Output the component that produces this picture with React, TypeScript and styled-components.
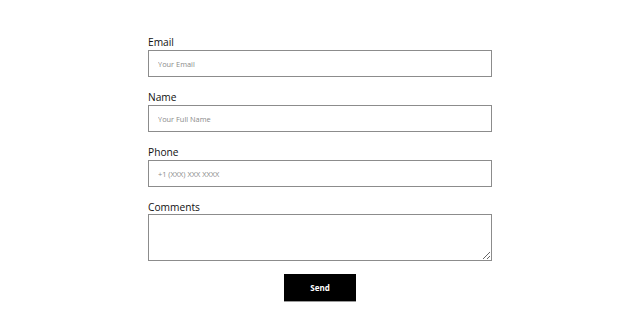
import React from 'react'
import styled, { createGlobalStyle } from 'styled-components'

const GlobalStyle = createGlobalStyle`
  body {
    margin: 0;
    background-color: #FFF;
    font-family: 'Open Sans', 'Liberation Sans', sans-serif;
  }
`

export const Page = styled.div`
  display: flex;
  justify-content: center;
  padding-top: 34px;
`

export const Form = styled.form`
  display: flex;
  flex-direction: column;
  width: 344px;
`

export const Field = styled.div`
  display: flex;
  flex-direction: column;
  margin-bottom: 12px;
`

export const Label = styled.label`
  font-size: 10.2px;
  line-height: 16px;
  color: #111;
`

const fieldBase = `
  box-sizing: border-box;
  width: 100%;
  border: 1px solid #8c8c8c;
  border-radius: 0;
  padding: 0 9px;
  font-family: 'Open Sans', 'Liberation Sans', sans-serif;
  font-size: 7.4px;
  color: #222;
  background-color: #FFF;
  outline: none;

  &::placeholder {
    color: #8a8a8a;
  }
`

export const Input = styled.input`
  ${fieldBase}
  height: 27px;
`

export const TextArea = styled.textarea`
  ${fieldBase}
  height: 47px;
  margin-top: -1px;
  padding-top: 6px;
  resize: vertical;
`

export const SendButton = styled.button`
  align-self: center;
  width: 72px;
  height: 28px;
  margin-top: 1px;
  border: none;
  border-bottom: 1px solid #9a9a9a;
  background-color: #000;
  color: #FFF;
  font-family: 'Open Sans', 'Liberation Sans', sans-serif;
  font-size: 8px;
  font-weight: 700;
  cursor: pointer;
`

interface FieldProps {
  label: string
  placeholder?: string
  type?: string
}

const TextField: React.FC<FieldProps> = ({ label, placeholder, type = 'text' }) => (
  <Field>
    <Label>{label}</Label>
    <Input type={type} placeholder={placeholder} />
  </Field>
)

export default function App() {
  return (
    <>
      <GlobalStyle />
      <Page>
        <Form onSubmit={(e) => e.preventDefault()}>
          <TextField label="Email" placeholder="Your Email" type="email" />
          <TextField label="Name" placeholder="Your Full Name" />
          <TextField label="Phone" placeholder="+1 (XXX) XXX XXXX" type="tel" />
          <Field>
            <Label>Comments</Label>
            <TextArea />
          </Field>
          <SendButton type="submit">Send</SendButton>
        </Form>
      </Page>
    </>
  )
}
